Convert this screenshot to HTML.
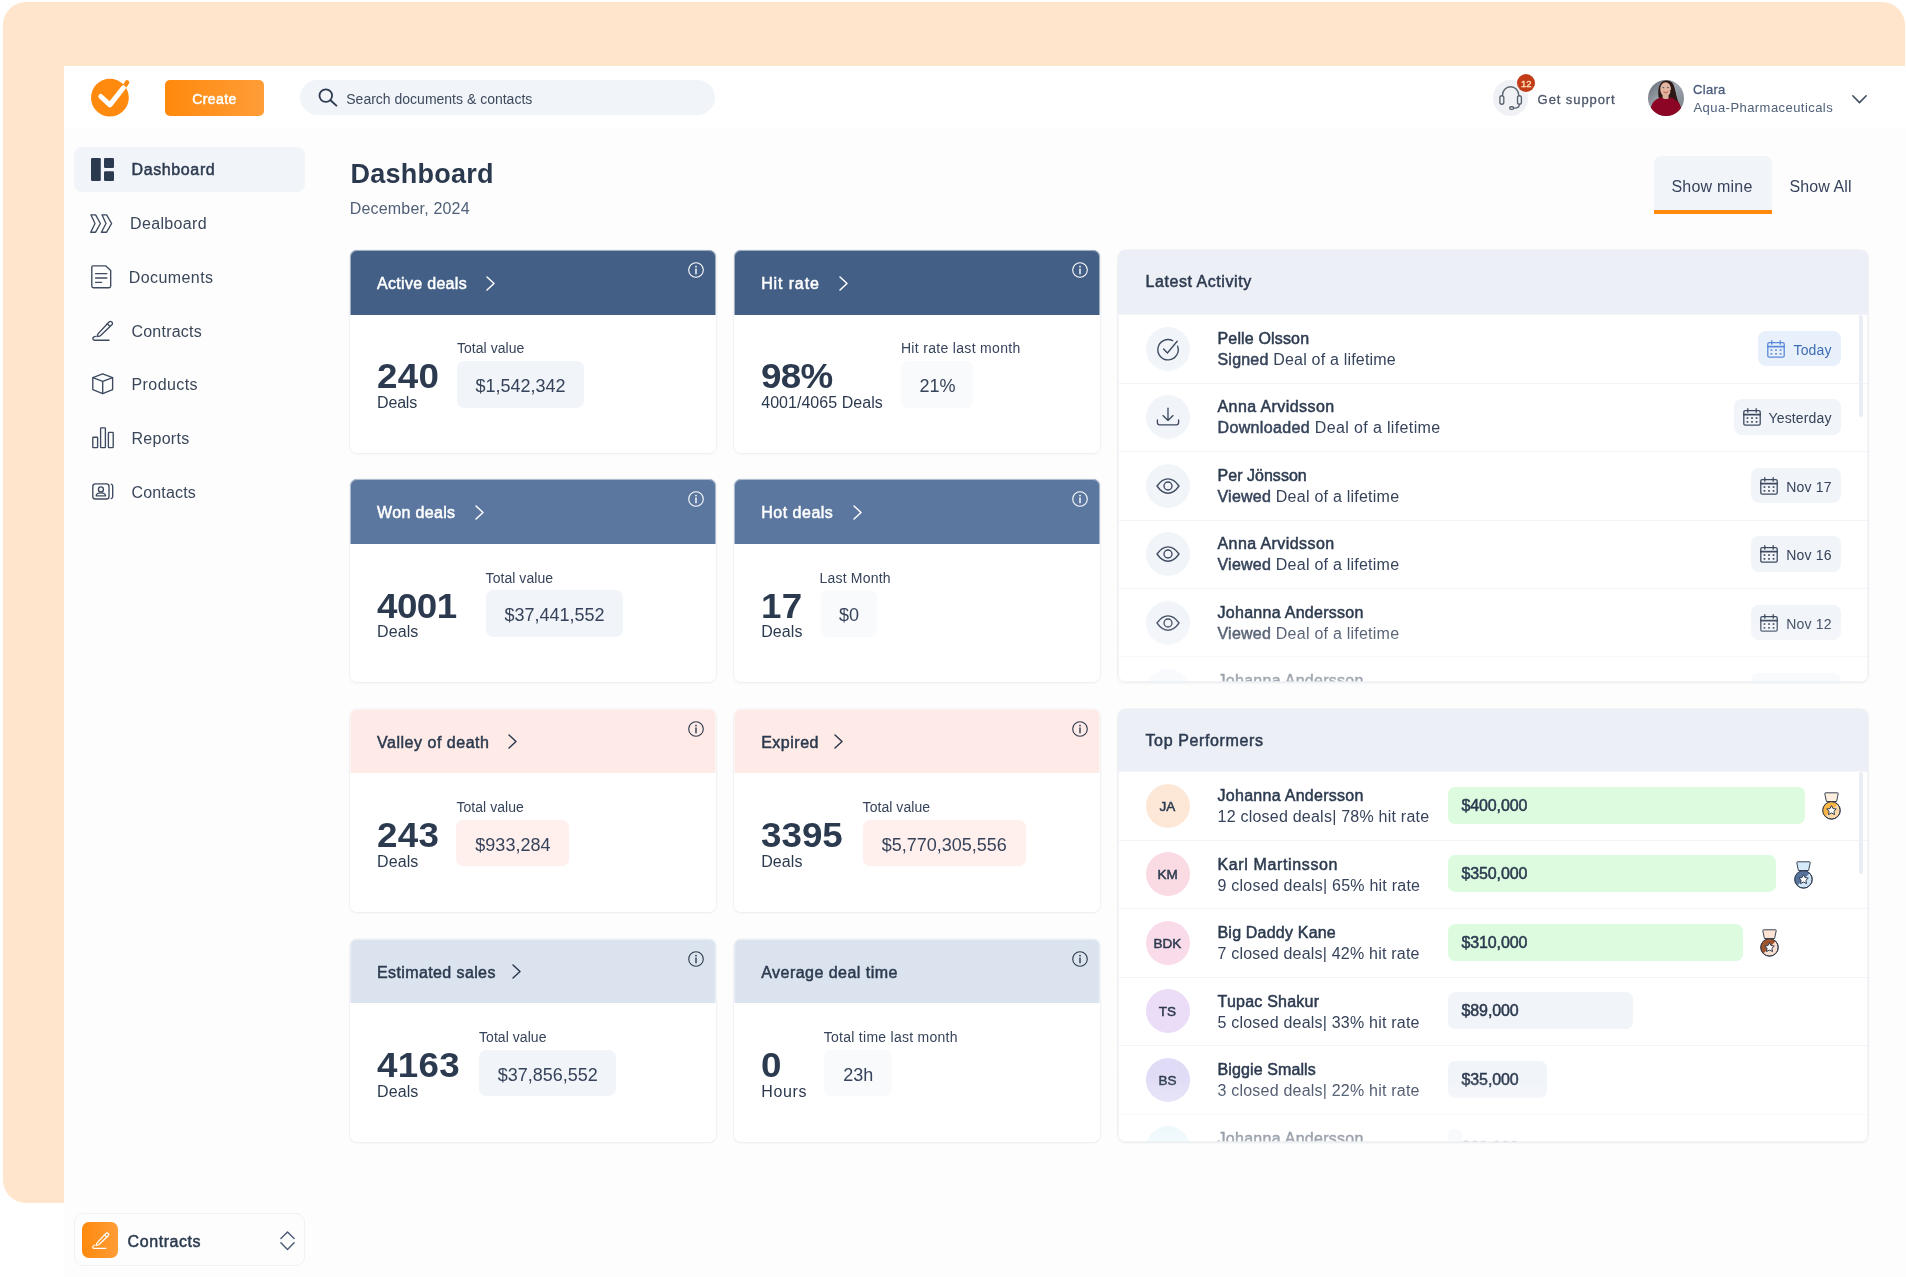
<!DOCTYPE html>
<html lang="en">
<head>
<meta charset="utf-8">
<title>Dashboard</title>
<style>
*{box-sizing:border-box;margin:0;padding:0}
html,body{width:1906px;height:1277px;overflow:hidden;background:#fff}
body{font-family:"Liberation Sans",sans-serif;color:#2c3a4f;font-size:16px;position:relative;letter-spacing:.15px}
.abs{position:absolute}
.peach{left:3px;top:2.1px;width:1901.9px;height:1200.8px;border-radius:23px;background:#ffe5cc}
.appbg{left:64.2px;top:65.9px;width:1842px;height:1212px;background:#fdfdfd}
.app{left:65px;top:66px;width:1841px;height:1211px;will-change:transform}
.topbar{left:-.8px;top:-.1px;width:1842px;height:62.6px;background:#fff}
.sb{font-weight:400;-webkit-text-stroke:.5px;letter-spacing:.3px}
svg{display:block;overflow:visible}
.create{left:100px;top:14px;width:99px;height:36px;border-radius:5px;background:linear-gradient(90deg,#ff890c,#ff9d38);color:#fff;font-size:14px;text-align:center;line-height:38px;font-weight:400;-webkit-text-stroke:.5px #fff}
.search{left:234.7px;top:13.7px;width:415.7px;height:35.8px;border-radius:18px;background:#f1f4f9}
.search span{position:absolute;left:46.6px;top:0;font-size:14px;line-height:38.5px;color:#3d4a5c;white-space:nowrap}
.supc{left:1428px;top:14.1px;width:35.3px;height:35.5px;border-radius:50%;background:#eff1f4}
.badge{left:1452.1px;top:7.7px;width:18.2px;height:18.2px;border-radius:50%;background:#c23c17;color:#ffe2b8;font-size:9.5px;font-weight:400;-webkit-text-stroke:.35px;line-height:20.3px;text-align:center;letter-spacing:0}
.nav{left:9px;width:231px;height:44px;border-radius:8px;line-height:45px;color:#3a4759;white-space:nowrap}
.nav.on{background:#f1f4f9;color:#2c3a4f}
.nav span{position:absolute;left:58px;top:0}
.nav svg{position:absolute}
.card{width:366px;height:203px;border-radius:7px;background:#fff;box-shadow:0 0 0 .6px #eceef2,0 1px 2.5px rgba(40,50,70,.08);overflow:hidden}
.card::after{content:'';position:absolute;inset:0;border:1px solid rgba(255,255,255,.5);border-radius:7px}
.ch{left:0;top:0;width:366px;height:64.8px}
.ch .t{position:absolute;left:27px;top:23px;line-height:22px;white-space:nowrap}
.ch .chev{position:absolute;top:25.8px}
.ch .info{position:absolute;left:338px;top:12.2px}
.num{font-size:35px;font-weight:700;line-height:40px;left:27px;top:106.5px;white-space:nowrap;transform:scaleX(1.05);transform-origin:0 0}
.sub{left:27px;top:143.3px;line-height:20px;white-space:nowrap}
.lbl{font-size:14px;top:89.4px;line-height:18px;white-space:nowrap;color:#36435a}
.val{top:111.3px;height:46.5px;border-radius:7px;background:#f1f4f9;font-size:18px;line-height:50px;text-align:center;white-space:nowrap;letter-spacing:0;color:#36435a}
.dark .ch{color:#fff}
.panel{left:1053px;width:750px;border-radius:7px;background:#fff;box-shadow:0 0 0 .6px #eceef2,0 1px 2.5px rgba(40,50,70,.08);overflow:hidden}
.panel::after{content:'';position:absolute;inset:0;border:1px solid rgba(236,239,246,.7);border-radius:7px}
.ph{left:0;top:0;width:750px;background:#eceff6}
.ph span{position:absolute;left:27.5px;line-height:22px;white-space:nowrap}
.row{left:0;width:750px;height:68.5px;border-top:1px solid #f3f4f7}
.ic{left:27.5px;top:11.5px;width:44px;height:44px;border-radius:50%;background:#f1f4f9}
.nm{left:99.5px;top:12.8px;line-height:21.4px;white-space:nowrap}
.l2{left:99.5px;top:33.6px;line-height:21.4px;white-space:nowrap;color:#36435a}
.chip{top:15.7px;height:35.5px;border-radius:8px;background:#f1f4f9;font-size:14px;line-height:38.6px;color:#36435a;white-space:nowrap}
.chip svg{position:absolute;left:9px;top:9px}
.chip span{position:absolute;top:0}
.bar{left:329.5px;top:14.7px;height:36.8px;border-radius:7px;background:#dcfbdf;line-height:38.4px;padding-left:14px;white-space:nowrap}
.bar.g{background:#f1f4f9}
.av{left:27.5px;top:11.3px;width:44px;height:44px;border-radius:50%;text-align:center;line-height:45px;font-size:13.5px;letter-spacing:0}
.scroll{left:741px;width:4px;border-radius:2px;background:#e9edf4}
.fade{left:0;width:750px;background:linear-gradient(180deg,rgba(255,255,255,0),rgba(255,255,255,.3) 45%,rgba(255,255,255,.58))}
</style>
</head>
<body>
<div class="abs peach"></div>
<div class="abs appbg"></div>
<div class="abs app">
<div class="abs topbar"></div>
<!-- header -->
<svg class="abs" style="left:26.3px;top:12.7px" width="38" height="38" viewBox="0 0 38 38"><circle cx="18.9" cy="18.7" r="18.9" fill="#ff8a0e"/><path d="M33.9 6.9 L36.1 3.4" stroke="#ff8a0e" stroke-width="4.4" stroke-linecap="round" fill="none"/><path d="M9.8 17.5 L18.9 25.9 L32.4 8.8" stroke="#fff" stroke-width="5" stroke-linecap="round" stroke-linejoin="round" fill="none"/></svg>
<div class="abs create"><span id="create" style="letter-spacing:0.45px">Create</span></div>
<div class="abs search"><span id="search" style="letter-spacing:-0.00px">Search documents &amp; contacts</span></div>
<svg class="abs" style="left:253.4px;top:22.4px" width="20" height="19" viewBox="0 0 20 19"><circle cx="7.8" cy="7.6" r="6.3" fill="none" stroke="#2c3a4f" stroke-width="1.8"/><path d="M12.5 12.2 L18.4 17.6" stroke="#2c3a4f" stroke-width="1.9" stroke-linecap="round"/></svg>
<div class="abs supc"></div>
<svg class="abs" style="left:1433px;top:18px" width="26" height="28" viewBox="0 0 26 28" fill="none" stroke="#59636f" stroke-width="1.35" stroke-linecap="round"><path d="M4.4 11.6 A8.2 8.9 0 0 1 20.8 11.6"/><rect x="1.9" y="11.7" width="3.9" height="8.5" rx="1.9"/><rect x="19.5" y="11.7" width="3.9" height="8.5" rx="1.9"/><path d="M21.3 20.4 Q21.3 24.1 16.4 24.1"/><rect x="11.7" y="22.7" width="3.9" height="2.7" rx="1.35"/></svg>
<div class="abs badge">12</div>
<div class="abs sb" style="left:1472.6px;top:25.4px;font-size:13px;-webkit-text-stroke:.3px;line-height:18px;color:#4b5668;letter-spacing:0.92px;white-space:nowrap" id="getsup">Get support</div>
<svg class="abs" style="left:1583px;top:13.5px" width="36" height="36" viewBox="0 0 36 36"><defs><clipPath id="avc"><circle cx="18" cy="18" r="18"/></clipPath><linearGradient id="avg" x1="0" y1="0" x2="1" y2="1"><stop offset="0" stop-color="#5f6670"/><stop offset=".45" stop-color="#a2a8b0"/><stop offset="1" stop-color="#727a84"/></linearGradient></defs><g clip-path="url(#avc)"><rect width="36" height="36" fill="url(#avg)"/><path d="M10.5 17 C9 6 13 0.5 18.5 0.5 C25 0.5 26.5 6 27.5 12 C28.5 18 30.5 21 31 25 L22 26 L12 20 Z" fill="#2e1816"/><ellipse cx="17.6" cy="9.2" rx="5.3" ry="7" fill="#e3b6a3"/><rect x="14.6" y="13.5" width="6" height="6" fill="#dcae9c"/><ellipse cx="15.4" cy="7.6" rx="1" ry=".55" fill="#4a4f5c"/><ellipse cx="20" cy="7.6" rx="1" ry=".55" fill="#4a4f5c"/><path d="M15.6 12 Q17.7 13.6 19.8 12" stroke="#c4473b" stroke-width=".9" fill="none" stroke-linecap="round"/><path d="M2 36 C2 22 8 18 14 17.5 C16 19.5 20 19.5 22 17.5 C29 18.5 34 23 34 36 Z" fill="#8c0524"/><path d="M21.5 10 C24 14 25 18 29.5 22.5 L27.5 12 Z" fill="#2e1816"/></g></svg>
<div class="abs sb" style="left:1628px;top:15.3px;font-size:13px;-webkit-text-stroke:.3px;line-height:18px;color:#4a5b7a;letter-spacing:0.30px" id="clara">Clara</div>
<div class="abs" style="left:1628.5px;top:33.1px;font-size:13px;line-height:18px;color:#4f6079;letter-spacing:0.44px;white-space:nowrap" id="aqua">Aqua-Pharmaceuticals</div>
<svg class="abs" style="left:1786.5px;top:29px" width="15" height="9" viewBox="0 0 15 9"><path d="M.8 .8 L7.5 7.6 L14.2 .8" fill="none" stroke="#3d4a5f" stroke-width="1.5" stroke-linecap="round" stroke-linejoin="round"/></svg>
<!-- sidebar -->
<div class="abs nav on" style="top:81.2px;height:44.6px"><svg style="left:17px;top:11px" width="23" height="23" viewBox="0 0 23 23" fill="#2c3a4f"><rect x="0" y="0" width="9.8" height="23" rx="1.2"/><rect x="13" y="0" width="10" height="10" rx="1.2"/><rect x="13" y="13.2" width="10" height="9.8" rx="1.2"/></svg><span class="sb" id="nv0" style="left:57.5px;letter-spacing:0.62px">Dashboard</span></div>
<div class="abs nav" style="top:135px"><svg style="left:15.7px;top:13px" width="22.5" height="19" viewBox="0 0 22.5 19" stroke="#3d4a5f" stroke-width="1.35" fill="none" stroke-linecap="round" stroke-linejoin="round"><path d="M.9 .8 H5.6 L10.4 9.5 L5.6 18.2 H.7 L5 9.5 Z"/><path d="M12 .8 H16.6 L21.6 9.5 L16.6 18.2 H11.4 L16 9.5 Z"/></svg><span id="nv1" style="left:56.1px;letter-spacing:0.33px">Dealboard</span></div>
<div class="abs nav" style="top:188.8px"><svg style="left:17px;top:10.3px" width="20.5" height="23.5" viewBox="0 0 20.5 23.5" stroke="#3d4a5f" stroke-width="1.35" fill="none" stroke-linecap="round" stroke-linejoin="round"><path d="M2 .8 H14.6 L19.7 5.6 V21 Q19.7 22.7 18 22.7 H2.4 Q.8 22.7 .8 21 V2 Q.8 .8 2 .8 Z"/><path d="M4.6 8.6 H15.8 M4.6 13 H15.8 M4.6 17.4 H10.6"/></svg><span id="nv2" style="left:54.8px;letter-spacing:0.41px">Documents</span></div>
<div class="abs nav" style="top:242.6px"><svg style="left:18px;top:10.6px" width="22" height="22" viewBox="0 0 22 22" stroke="#3d4a5f" stroke-width="1.35" fill="none" stroke-linecap="round" stroke-linejoin="round"><path d="M6.2 14.6 L17 3 Q18.4 1.6 19.8 3 Q21.2 4.4 19.8 5.8 L8.4 16.8 L5 17.6 Z"/><path d="M15.4 4.8 L18 7.4"/><path d="M3.4 17.4 Q.8 18 .8 19.6 Q.8 21.2 2.6 21.2 H17"/></svg><span id="nv3" style="left:57.5px;letter-spacing:0.21px">Contracts</span></div>
<div class="abs nav" style="top:296.3px"><svg style="left:18px;top:11.2px" width="21.5" height="21.5" viewBox="0 0 21.5 21.5" stroke="#3d4a5f" stroke-width="1.35" fill="none" stroke-linecap="round" stroke-linejoin="round"><path d="M10.7 .8 L20.6 4.6 V16.6 L10.7 20.6 L.8 16.6 V4.6 Z"/><path d="M.8 4.6 L10.7 8.4 L20.6 4.6 M10.7 8.4 V20.6"/></svg><span id="nv4" style="left:57.5px;letter-spacing:0.42px">Products</span></div>
<div class="abs nav" style="top:350.1px"><svg style="left:18px;top:11.2px" width="22" height="21.5" viewBox="0 0 22 21.5" stroke="#3d4a5f" stroke-width="1.35" fill="none" stroke-linecap="round" stroke-linejoin="round"><rect x=".8" y="10.2" width="4.8" height="10.4" rx=".6"/><rect x="8.6" y=".8" width="4.8" height="19.8" rx=".6"/><rect x="16.4" y="5.4" width="4.8" height="15.2" rx=".6"/></svg><span id="nv5" style="left:57.5px;letter-spacing:0.28px">Reports</span></div>
<div class="abs nav" style="top:403.8px"><svg style="left:18px;top:13.6px" width="21.5" height="17" viewBox="0 0 21.5 17" stroke="#3d4a5f" stroke-width="1.35" fill="none" stroke-linecap="round" stroke-linejoin="round"><rect x=".8" y=".8" width="16.2" height="15.2" rx="2.6"/><circle cx="8.9" cy="6.4" r="2.5"/><path d="M4.2 12.8 Q4.4 9.8 8.9 9.8 Q13.4 9.8 13.6 12.8 Z"/><path d="M19.2 1.2 Q20.7 1.6 20.7 3.4 V13.4 Q20.7 15.2 19.2 15.6"/></svg><span id="nv6" style="left:57.5px;letter-spacing:0.16px">Contacts</span></div>
<div class="abs" style="left:9.3px;top:1147.3px;width:230.5px;height:53px;border:1px solid #eff1f5;border-radius:9px;background:#fdfdfd"></div>
<div class="abs" style="left:17.3px;top:1155.7px;width:36px;height:36px;border-radius:7px;background:linear-gradient(90deg,#ff890c,#ff9d38)"></div>
<svg class="abs" style="left:26.5px;top:1164.5px" width="18" height="18" viewBox="0 0 22 22" stroke="#fff" stroke-width="1.5" fill="none" stroke-linecap="round" stroke-linejoin="round"><path d="M6.2 14.6 L17 3 Q18.4 1.6 19.8 3 Q21.2 4.4 19.8 5.8 L8.4 16.8 L5 17.6 Z"/><path d="M15.4 4.8 L18 7.4"/><path d="M3.4 17.4 Q.8 18 .8 19.6 Q.8 21.2 2.6 21.2 H17"/></svg>
<div class="abs sb" style="left:62.6px;top:1164.9px;line-height:22px;letter-spacing:0.57px" id="swc">Contracts</div>
<svg class="abs" style="left:215px;top:1164.6px" width="15" height="20" viewBox="0 0 15 20" fill="none" stroke="#4a5a74" stroke-width="1.4" stroke-linecap="round" stroke-linejoin="round"><path d="M.9 7.6 L7.5 .9 L14.1 7.6"/><path d="M.9 11.8 L7.5 18.5 L14.1 11.8"/></svg>
<!-- main heading -->
<div class="abs" id="title" style="left:285.6px;top:90.5px;font-size:27px;font-weight:700;line-height:34px;letter-spacing:0.22px;color:#2b394e">Dashboard</div>
<div class="abs" id="subtitle" style="left:284.7px;top:133.3px;line-height:20px;color:#4f6078;white-space:nowrap;letter-spacing:0.19px">December, 2024</div>
<div class="abs" style="left:1589px;top:90.1px;width:117.6px;height:58px;border-radius:7px 7px 0 0;background:#f1f4f9;border-bottom:4.5px solid #ff8a0e"></div>
<div class="abs" id="tab1" style="left:1606.4px;top:110px;line-height:22px;color:#36435a;white-space:nowrap;letter-spacing:0.23px">Show mine</div>
<div class="abs" id="tab2" style="left:1724.4px;top:110px;line-height:22px;color:#36435a;white-space:nowrap;letter-spacing:0.12px">Show All</div>
<!-- cards -->
<div class="abs card dark" style="left:285px;top:183.9px"><div class="abs ch" style="background:#435f85"><span class="t sb" id="ct0" style="letter-spacing:0.31px">Active deals</span><svg class="chev" style="left:136.3px" width="9" height="15" viewBox="0 0 9 15" fill="none" stroke="currentColor" stroke-width="1.5" stroke-linecap="round" stroke-linejoin="round"><path d="M1 1 L8 7.5 L1 14"/></svg><svg class="info" width="16" height="16" viewBox="0 0 16 16" fill="none" stroke="currentColor" stroke-width="1.1"><circle cx="8" cy="8" r="7.3"/><path d="M8 7 V11.8" stroke-width="1.4" stroke-linecap="round"/><circle cx="8" cy="4.6" r=".9" fill="currentColor" stroke="none"/></svg></div><div class="abs num" id="cn0" style="letter-spacing:0.30px">240</div><div class="abs sub" id="cs0" style="letter-spacing:-0.16px">Deals</div><div class="abs lbl" id="cl0" style="left:107px;letter-spacing:0.03px">Total value</div><div class="abs val" style="left:107px;width:127px;background:#f1f4f9"><span id="cv0">$1,542,342</span></div></div>
<div class="abs card dark" style="left:669.2px;top:183.9px"><div class="abs ch" style="background:#435f85"><span class="t sb" id="ct1" style="letter-spacing:0.87px">Hit rate</span><svg class="chev" style="left:104.4px" width="9" height="15" viewBox="0 0 9 15" fill="none" stroke="currentColor" stroke-width="1.5" stroke-linecap="round" stroke-linejoin="round"><path d="M1 1 L8 7.5 L1 14"/></svg><svg class="info" width="16" height="16" viewBox="0 0 16 16" fill="none" stroke="currentColor" stroke-width="1.1"><circle cx="8" cy="8" r="7.3"/><path d="M8 7 V11.8" stroke-width="1.4" stroke-linecap="round"/><circle cx="8" cy="4.6" r=".9" fill="currentColor" stroke="none"/></svg></div><div class="abs num" id="cn1" style="letter-spacing:-0.60px">98%</div><div class="abs sub" id="cs1" style="letter-spacing:0.04px">4001/4065 Deals</div><div class="abs lbl" id="cl1" style="left:166.70000000000002px;letter-spacing:0.32px">Hit rate last month</div><div class="abs val" style="left:167.3px;width:72px;background:#f8fafc"><span id="cv1">21%</span></div></div>
<div class="abs card dark" style="left:285px;top:413.2px"><div class="abs ch" style="background:#5b779f"><span class="t sb" id="ct2" style="letter-spacing:0.35px">Won deals</span><svg class="chev" style="left:124.9px" width="9" height="15" viewBox="0 0 9 15" fill="none" stroke="currentColor" stroke-width="1.5" stroke-linecap="round" stroke-linejoin="round"><path d="M1 1 L8 7.5 L1 14"/></svg><svg class="info" width="16" height="16" viewBox="0 0 16 16" fill="none" stroke="currentColor" stroke-width="1.1"><circle cx="8" cy="8" r="7.3"/><path d="M8 7 V11.8" stroke-width="1.4" stroke-linecap="round"/><circle cx="8" cy="4.6" r=".9" fill="currentColor" stroke="none"/></svg></div><div class="abs num" id="cn2" style="letter-spacing:-0.50px">4001</div><div class="abs sub" id="cs2" style="letter-spacing:0.10px">Deals</div><div class="abs lbl" id="cl2" style="left:135.6px;letter-spacing:0.05px">Total value</div><div class="abs val" style="left:135.6px;width:137.8px;background:#f1f4f9"><span id="cv2">$37,441,552</span></div></div>
<div class="abs card dark" style="left:669.2px;top:413.2px"><div class="abs ch" style="background:#5b779f"><span class="t sb" id="ct3" style="letter-spacing:0.51px">Hot deals</span><svg class="chev" style="left:119px" width="9" height="15" viewBox="0 0 9 15" fill="none" stroke="currentColor" stroke-width="1.5" stroke-linecap="round" stroke-linejoin="round"><path d="M1 1 L8 7.5 L1 14"/></svg><svg class="info" width="16" height="16" viewBox="0 0 16 16" fill="none" stroke="currentColor" stroke-width="1.1"><circle cx="8" cy="8" r="7.3"/><path d="M8 7 V11.8" stroke-width="1.4" stroke-linecap="round"/><circle cx="8" cy="4.6" r=".9" fill="currentColor" stroke="none"/></svg></div><div class="abs num" id="cn3" style="letter-spacing:0.30px">17</div><div class="abs sub" id="cs3" style="letter-spacing:0.10px">Deals</div><div class="abs lbl" id="cl3" style="left:85.3px;letter-spacing:0.20px">Last Month</div><div class="abs val" style="left:86.5px;width:56.7px;background:#f8fafc"><span id="cv3">$0</span></div></div>
<div class="abs card " style="left:285px;top:642.7px"><div class="abs ch" style="background:#feeae6"><span class="t sb" id="ct4" style="letter-spacing:0.52px">Valley of death</span><svg class="chev" style="left:157.8px" width="9" height="15" viewBox="0 0 9 15" fill="none" stroke="currentColor" stroke-width="1.5" stroke-linecap="round" stroke-linejoin="round"><path d="M1 1 L8 7.5 L1 14"/></svg><svg class="info" width="16" height="16" viewBox="0 0 16 16" fill="none" stroke="currentColor" stroke-width="1.1"><circle cx="8" cy="8" r="7.3"/><path d="M8 7 V11.8" stroke-width="1.4" stroke-linecap="round"/><circle cx="8" cy="4.6" r=".9" fill="currentColor" stroke="none"/></svg></div><div class="abs num" id="cn4" style="letter-spacing:0.30px">243</div><div class="abs sub" id="cs4" style="letter-spacing:0.10px">Deals</div><div class="abs lbl" id="cl4" style="left:106.4px;letter-spacing:0.05px">Total value</div><div class="abs val" style="left:106.4px;width:113px;background:#fff0ee"><span id="cv4">$933,284</span></div></div>
<div class="abs card " style="left:669.2px;top:642.7px"><div class="abs ch" style="background:#feeae6"><span class="t sb" id="ct5" style="letter-spacing:0.50px">Expired</span><svg class="chev" style="left:99.6px" width="9" height="15" viewBox="0 0 9 15" fill="none" stroke="currentColor" stroke-width="1.5" stroke-linecap="round" stroke-linejoin="round"><path d="M1 1 L8 7.5 L1 14"/></svg><svg class="info" width="16" height="16" viewBox="0 0 16 16" fill="none" stroke="currentColor" stroke-width="1.1"><circle cx="8" cy="8" r="7.3"/><path d="M8 7 V11.8" stroke-width="1.4" stroke-linecap="round"/><circle cx="8" cy="4.6" r=".9" fill="currentColor" stroke="none"/></svg></div><div class="abs num" id="cn5" style="letter-spacing:0.00px">3395</div><div class="abs sub" id="cs5" style="letter-spacing:0.10px">Deals</div><div class="abs lbl" id="cl5" style="left:128.4px;letter-spacing:0.05px">Total value</div><div class="abs val" style="left:128.4px;width:163.3px;background:#fff0ee"><span id="cv5">$5,770,305,556</span></div></div>
<div class="abs card " style="left:285px;top:872.6px"><div class="abs ch" style="background:#dbe3ee"><span class="t sb" id="ct6" style="letter-spacing:0.39px">Estimated sales</span><svg class="chev" style="left:162px" width="9" height="15" viewBox="0 0 9 15" fill="none" stroke="currentColor" stroke-width="1.5" stroke-linecap="round" stroke-linejoin="round"><path d="M1 1 L8 7.5 L1 14"/></svg><svg class="info" width="16" height="16" viewBox="0 0 16 16" fill="none" stroke="currentColor" stroke-width="1.1"><circle cx="8" cy="8" r="7.3"/><path d="M8 7 V11.8" stroke-width="1.4" stroke-linecap="round"/><circle cx="8" cy="4.6" r=".9" fill="currentColor" stroke="none"/></svg></div><div class="abs num" id="cn6" style="letter-spacing:0.30px">4163</div><div class="abs sub" id="cs6" style="letter-spacing:0.10px">Deals</div><div class="abs lbl" id="cl6" style="left:129px;letter-spacing:0.05px">Total value</div><div class="abs val" style="left:129px;width:137.4px;background:#f1f4f9"><span id="cv6">$37,856,552</span></div></div>
<div class="abs card " style="left:669.2px;top:872.6px"><div class="abs ch" style="background:#dbe3ee"><span class="t sb" id="ct7" style="letter-spacing:0.47px">Average deal time</span><svg class="info" width="16" height="16" viewBox="0 0 16 16" fill="none" stroke="currentColor" stroke-width="1.1"><circle cx="8" cy="8" r="7.3"/><path d="M8 7 V11.8" stroke-width="1.4" stroke-linecap="round"/><circle cx="8" cy="4.6" r=".9" fill="currentColor" stroke="none"/></svg></div><div class="abs num" id="cn7" style="letter-spacing:0.00px">0</div><div class="abs sub" id="cs7" style="letter-spacing:0.65px">Hours</div><div class="abs lbl" id="cl7" style="left:89.60000000000001px;letter-spacing:0.27px">Total time last month</div><div class="abs val" style="left:90.2px;width:67.8px;background:#f8fafc"><span id="cv7">23h</span></div></div>
<!-- panels -->
<div class="abs panel" style="top:184px;height:432px"><div class="abs ph" style="height:64.5px"><span class="sb" style="top:21px;letter-spacing:0.56px" id="ph1">Latest Activity</span></div>
<div class="abs row" style="top:64.2px"><div class="abs ic"><svg class="abs" style="left:10px;top:10px" width="24" height="24" viewBox="0 0 24 24" fill="none" stroke="#3d4a5f" stroke-width="1.35" stroke-linecap="round" stroke-linejoin="round"><path d="M21.6 9.2 A10.2 10.2 0 1 1 16.6 3.6"/><path d="M7.6 12 L11.4 16 L21.2 4.2"/></svg></div><div class="abs nm sb" id="an0" style="letter-spacing:0.16px">Pelle Olsson</div><div class="abs l2" id="al0" style="letter-spacing:0.20px"><b class="sb" style="letter-spacing:inherit">Signed</b> Deal of a lifetime</div><div class="abs chip" style="left:639.5px;width:83.5px;background:#e8f0fc;color:#3f6db3"><svg width="18" height="18" viewBox="0 0 18 18" fill="none" stroke="#5a8bd8" stroke-width="1.3" stroke-linecap="round" stroke-linejoin="round"><rect x=".8" y="2.6" width="16.4" height="14.6" rx="1.4"/><path d="M4.8 .7 V4.2 M13.2 .7 V4.2"/><path d="M.8 6.6 H17.2" stroke-width="1.8"/><g stroke="none" fill="#5a8bd8"><rect x="3.6" y="9.2" width="1.7" height="1.7"/><rect x="8.15" y="9.2" width="1.7" height="1.7"/><rect x="12.7" y="9.2" width="1.7" height="1.7"/><rect x="3.6" y="13" width="1.7" height="1.7"/><rect x="8.15" y="13" width="1.7" height="1.7"/><rect x="12.7" y="13" width="1.7" height="1.7"/></g></svg><span style="right:9.4px" id="ad0">Today</span></div></div>
<div class="abs row" style="top:132.6px"><div class="abs ic"><svg class="abs" style="left:10px;top:10px" width="24" height="24" viewBox="0 0 24 24" fill="none" stroke="#3d4a5f" stroke-width="1.35" stroke-linecap="round" stroke-linejoin="round"><path d="M12 3.2 V15.2 M7 10.6 L12 15.4 L17 10.6"/><path d="M1.4 14.8 V17.6 Q1.4 19.8 3.6 19.8 H20.4 Q22.6 19.8 22.6 17.6 V14.8"/></svg></div><div class="abs nm sb" id="an1" style="letter-spacing:0.42px">Anna Arvidsson</div><div class="abs l2" id="al1" style="letter-spacing:0.36px"><b class="sb" style="letter-spacing:inherit">Downloaded</b> Deal of a lifetime</div><div class="abs chip" style="left:615.5px;width:107.5px"><svg width="18" height="18" viewBox="0 0 18 18" fill="none" stroke="#3d4a5f" stroke-width="1.3" stroke-linecap="round" stroke-linejoin="round"><rect x=".8" y="2.6" width="16.4" height="14.6" rx="1.4"/><path d="M4.8 .7 V4.2 M13.2 .7 V4.2"/><path d="M.8 6.6 H17.2" stroke-width="1.8"/><g stroke="none" fill="#3d4a5f"><rect x="3.6" y="9.2" width="1.7" height="1.7"/><rect x="8.15" y="9.2" width="1.7" height="1.7"/><rect x="12.7" y="9.2" width="1.7" height="1.7"/><rect x="3.6" y="13" width="1.7" height="1.7"/><rect x="8.15" y="13" width="1.7" height="1.7"/><rect x="12.7" y="13" width="1.7" height="1.7"/></g></svg><span style="right:9.4px" id="ad1">Yesterday</span></div></div>
<div class="abs row" style="top:201.1px"><div class="abs ic"><svg class="abs" style="left:10px;top:10px" width="24" height="24" viewBox="0 0 24 24" fill="none" stroke="#3d4a5f" stroke-width="1.35" stroke-linecap="round" stroke-linejoin="round"><path d="M1 12 Q6 4.8 12 4.8 Q18 4.8 23 12 Q18 19.2 12 19.2 Q6 19.2 1 12 Z"/><circle cx="12" cy="12" r="4"/></svg></div><div class="abs nm sb" id="an2" style="letter-spacing:0.03px">Per Jönsson</div><div class="abs l2" id="al2" style="letter-spacing:0.24px"><b class="sb" style="letter-spacing:inherit">Viewed</b> Deal of a lifetime</div><div class="abs chip" style="left:633.2px;width:89.8px"><svg width="18" height="18" viewBox="0 0 18 18" fill="none" stroke="#3d4a5f" stroke-width="1.3" stroke-linecap="round" stroke-linejoin="round"><rect x=".8" y="2.6" width="16.4" height="14.6" rx="1.4"/><path d="M4.8 .7 V4.2 M13.2 .7 V4.2"/><path d="M.8 6.6 H17.2" stroke-width="1.8"/><g stroke="none" fill="#3d4a5f"><rect x="3.6" y="9.2" width="1.7" height="1.7"/><rect x="8.15" y="9.2" width="1.7" height="1.7"/><rect x="12.7" y="9.2" width="1.7" height="1.7"/><rect x="3.6" y="13" width="1.7" height="1.7"/><rect x="8.15" y="13" width="1.7" height="1.7"/><rect x="12.7" y="13" width="1.7" height="1.7"/></g></svg><span style="right:9.4px" id="ad2">Nov 17</span></div></div>
<div class="abs row" style="top:269.6px"><div class="abs ic"><svg class="abs" style="left:10px;top:10px" width="24" height="24" viewBox="0 0 24 24" fill="none" stroke="#3d4a5f" stroke-width="1.35" stroke-linecap="round" stroke-linejoin="round"><path d="M1 12 Q6 4.8 12 4.8 Q18 4.8 23 12 Q18 19.2 12 19.2 Q6 19.2 1 12 Z"/><circle cx="12" cy="12" r="4"/></svg></div><div class="abs nm sb" id="an3" style="letter-spacing:0.42px">Anna Arvidsson</div><div class="abs l2" id="al3" style="letter-spacing:0.24px"><b class="sb" style="letter-spacing:inherit">Viewed</b> Deal of a lifetime</div><div class="abs chip" style="left:633.2px;width:89.8px"><svg width="18" height="18" viewBox="0 0 18 18" fill="none" stroke="#3d4a5f" stroke-width="1.3" stroke-linecap="round" stroke-linejoin="round"><rect x=".8" y="2.6" width="16.4" height="14.6" rx="1.4"/><path d="M4.8 .7 V4.2 M13.2 .7 V4.2"/><path d="M.8 6.6 H17.2" stroke-width="1.8"/><g stroke="none" fill="#3d4a5f"><rect x="3.6" y="9.2" width="1.7" height="1.7"/><rect x="8.15" y="9.2" width="1.7" height="1.7"/><rect x="12.7" y="9.2" width="1.7" height="1.7"/><rect x="3.6" y="13" width="1.7" height="1.7"/><rect x="8.15" y="13" width="1.7" height="1.7"/><rect x="12.7" y="13" width="1.7" height="1.7"/></g></svg><span style="right:9.4px" id="ad3">Nov 16</span></div></div>
<div class="abs row" style="top:338.0px"><div class="abs ic"><svg class="abs" style="left:10px;top:10px" width="24" height="24" viewBox="0 0 24 24" fill="none" stroke="#3d4a5f" stroke-width="1.35" stroke-linecap="round" stroke-linejoin="round"><path d="M1 12 Q6 4.8 12 4.8 Q18 4.8 23 12 Q18 19.2 12 19.2 Q6 19.2 1 12 Z"/><circle cx="12" cy="12" r="4"/></svg></div><div class="abs nm sb" id="an4" style="letter-spacing:0.28px">Johanna Andersson</div><div class="abs l2" id="al4" style="letter-spacing:0.24px"><b class="sb" style="letter-spacing:inherit">Viewed</b> Deal of a lifetime</div><div class="abs chip" style="left:633.2px;width:89.8px"><svg width="18" height="18" viewBox="0 0 18 18" fill="none" stroke="#3d4a5f" stroke-width="1.3" stroke-linecap="round" stroke-linejoin="round"><rect x=".8" y="2.6" width="16.4" height="14.6" rx="1.4"/><path d="M4.8 .7 V4.2 M13.2 .7 V4.2"/><path d="M.8 6.6 H17.2" stroke-width="1.8"/><g stroke="none" fill="#3d4a5f"><rect x="3.6" y="9.2" width="1.7" height="1.7"/><rect x="8.15" y="9.2" width="1.7" height="1.7"/><rect x="12.7" y="9.2" width="1.7" height="1.7"/><rect x="3.6" y="13" width="1.7" height="1.7"/><rect x="8.15" y="13" width="1.7" height="1.7"/><rect x="12.7" y="13" width="1.7" height="1.7"/></g></svg><span style="right:9.4px" id="ad4">Nov 12</span></div></div>
<div class="abs row" style="top:406.4px"><div class="abs ic"><svg class="abs" style="left:10px;top:10px" width="24" height="24" viewBox="0 0 24 24" fill="none" stroke="#3d4a5f" stroke-width="1.35" stroke-linecap="round" stroke-linejoin="round"><path d="M1 12 Q6 4.8 12 4.8 Q18 4.8 23 12 Q18 19.2 12 19.2 Q6 19.2 1 12 Z"/><circle cx="12" cy="12" r="4"/></svg></div><div class="abs nm sb" id="an5" style="letter-spacing:0.28px">Johanna Andersson</div><div class="abs l2" id="al5" style="letter-spacing:0.15px"><b class="sb" style="letter-spacing:inherit">Viewed</b> Deal of a lifetime</div><div class="abs chip" style="left:633.2px;width:89.8px"><svg width="18" height="18" viewBox="0 0 18 18" fill="none" stroke="#3d4a5f" stroke-width="1.3" stroke-linecap="round" stroke-linejoin="round"><rect x=".8" y="2.6" width="16.4" height="14.6" rx="1.4"/><path d="M4.8 .7 V4.2 M13.2 .7 V4.2"/><path d="M.8 6.6 H17.2" stroke-width="1.8"/><g stroke="none" fill="#3d4a5f"><rect x="3.6" y="9.2" width="1.7" height="1.7"/><rect x="8.15" y="9.2" width="1.7" height="1.7"/><rect x="12.7" y="9.2" width="1.7" height="1.7"/><rect x="3.6" y="13" width="1.7" height="1.7"/><rect x="8.15" y="13" width="1.7" height="1.7"/><rect x="12.7" y="13" width="1.7" height="1.7"/></g></svg><span style="right:9.4px" id="ad5">Nov 10</span></div></div>
<div class="abs scroll" style="top:64.5px;height:102px"></div><div class="abs fade" style="top:366px;height:66px"></div></div>
<div class="abs panel" style="top:642.5px;height:433.4px"><div class="abs ph" style="height:63px"><span class="sb" style="top:21.7px;letter-spacing:0.62px" id="ph2">Top Performers</span></div>
<div class="abs row" style="top:62.8px"><div class="abs av sb" style="background:#fde8d8">JA</div><div class="abs nm sb" style="top:13.2px;letter-spacing:0.28px" id="pn0">Johanna Andersson</div><div class="abs l2" style="top:34px;letter-spacing:0.23px" id="pl0">12 closed deals| 78% hit rate</div><div class="abs bar sb" style="width:357.4px"><span id="pv0" style="letter-spacing:-0.13px">$400,000</span></div><svg class="abs" style="left:703.8px;top:19.9px" width="19" height="28" viewBox="0 0 19 28" stroke="#2f3b4e" stroke-width=".95" stroke-linejoin="round"><path d="M3.6 .8 H15.4 Q16.4 .8 16.2 1.8 L14.6 9.5 H4.4 L2.8 1.8 Q2.6 .8 3.6 .8 Z" fill="#fdeedd"/><circle cx="9.5" cy="18.4" r="8.7" fill="#fbd9a6"/><path d="M9.5 9.7 A8.7 8.7 0 0 0 3.4 24.6 L15.6 12.2 A8.7 8.7 0 0 0 9.5 9.7 Z" fill="#f9b545" stroke="none"/><circle cx="9.5" cy="18.4" r="8.7" fill="none"/><path d="M9.5 13.6 L11 16.6 L14.3 17 L11.9 19.3 L12.5 22.6 L9.5 21 L6.5 22.6 L7.1 19.3 L4.7 17 L8 16.6 Z" fill="#fff" stroke-width="1"/></svg></div>
<div class="abs row" style="top:131.3px"><div class="abs av sb" style="background:#fbdbe3">KM</div><div class="abs nm sb" style="top:13.2px;letter-spacing:0.63px" id="pn1">Karl Martinsson</div><div class="abs l2" style="top:34px;letter-spacing:0.23px" id="pl1">9 closed deals| 65% hit rate</div><div class="abs bar sb" style="width:328.7px"><span id="pv1" style="letter-spacing:-0.13px">$350,000</span></div><svg class="abs" style="left:675.5px;top:19.9px" width="19" height="28" viewBox="0 0 19 28" stroke="#2f3b4e" stroke-width=".95" stroke-linejoin="round"><path d="M3.6 .8 H15.4 Q16.4 .8 16.2 1.8 L14.6 9.5 H4.4 L2.8 1.8 Q2.6 .8 3.6 .8 Z" fill="#d6ebfa"/><circle cx="9.5" cy="18.4" r="8.7" fill="#cfe6f8"/><path d="M9.5 9.7 A8.7 8.7 0 0 0 3.4 24.6 L15.6 12.2 A8.7 8.7 0 0 0 9.5 9.7 Z" fill="#56749c" stroke="none"/><circle cx="9.5" cy="18.4" r="8.7" fill="none"/><path d="M9.5 13.6 L11 16.6 L14.3 17 L11.9 19.3 L12.5 22.6 L9.5 21 L6.5 22.6 L7.1 19.3 L4.7 17 L8 16.6 Z" fill="#fff" stroke-width="1"/></svg></div>
<div class="abs row" style="top:199.8px"><div class="abs av sb" style="background:#fadbea">BDK</div><div class="abs nm sb" style="top:13.2px;letter-spacing:0.20px" id="pn2">Big Daddy Kane</div><div class="abs l2" style="top:34px;letter-spacing:0.21px" id="pl2">7 closed deals| 42% hit rate</div><div class="abs bar sb" style="width:295.2px"><span id="pv2" style="letter-spacing:-0.13px">$310,000</span></div><svg class="abs" style="left:641.8px;top:19.9px" width="19" height="28" viewBox="0 0 19 28" stroke="#2f3b4e" stroke-width=".95" stroke-linejoin="round"><path d="M3.6 .8 H15.4 Q16.4 .8 16.2 1.8 L14.6 9.5 H4.4 L2.8 1.8 Q2.6 .8 3.6 .8 Z" fill="#fde3d3"/><circle cx="9.5" cy="18.4" r="8.7" fill="#fbe0d0"/><path d="M9.5 9.7 A8.7 8.7 0 0 0 3.4 24.6 L15.6 12.2 A8.7 8.7 0 0 0 9.5 9.7 Z" fill="#a0542c" stroke="none"/><circle cx="9.5" cy="18.4" r="8.7" fill="none"/><path d="M9.5 13.6 L11 16.6 L14.3 17 L11.9 19.3 L12.5 22.6 L9.5 21 L6.5 22.6 L7.1 19.3 L4.7 17 L8 16.6 Z" fill="#fff" stroke-width="1"/></svg></div>
<div class="abs row" style="top:268.3px"><div class="abs av sb" style="background:#ebdcf7">TS</div><div class="abs nm sb" style="top:13.2px;letter-spacing:0.23px" id="pn3">Tupac Shakur</div><div class="abs l2" style="top:34px;letter-spacing:0.21px" id="pl3">5 closed deals| 33% hit rate</div><div class="abs bar sb g" style="width:185.2px"><span id="pv3" style="letter-spacing:-0.10px">$89,000</span></div></div>
<div class="abs row" style="top:336.8px"><div class="abs av sb" style="background:#e0dcf7">BS</div><div class="abs nm sb" style="top:13.2px;letter-spacing:0.11px" id="pn4">Biggie Smalls</div><div class="abs l2" style="top:34px;letter-spacing:0.21px" id="pl4">3 closed deals| 22% hit rate</div><div class="abs bar sb g" style="width:99.8px"><span id="pv4" style="letter-spacing:-0.10px">$35,000</span></div></div>
<div class="abs row" style="top:405.3px"><div class="abs av sb" style="background:#e0f4fb">JA</div><div class="abs nm sb" style="top:13.2px;letter-spacing:0.28px" id="pn5">Johanna Andersson</div><div class="abs l2" style="top:34px;letter-spacing:0.21px" id="pl5">2 closed deals| 12% hit rate</div><div class="abs bar sb g" style="width:7.5px"><span id="pv5" style="letter-spacing:-0.10px">$20,000</span></div></div>
<div class="abs scroll" style="top:63px;height:102px"></div><div class="abs fade" style="top:367px;height:67px"></div></div>
</div>
</body>
</html>
